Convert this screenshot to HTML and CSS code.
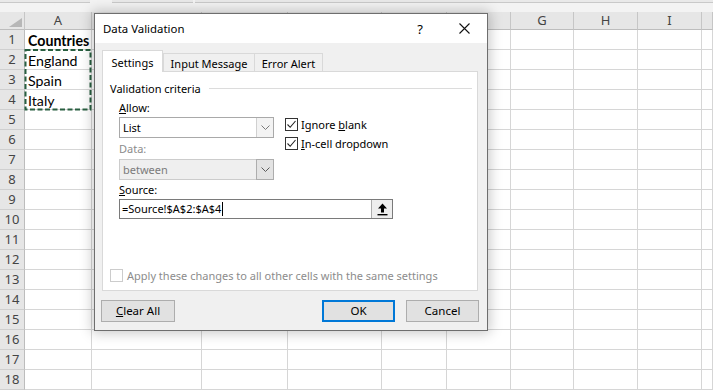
FILE: index.html
```html
<!DOCTYPE html>
<html>
<head>
<meta charset="utf-8">
<title>Data Validation</title>
<link rel="stylesheet" href="styles.css">
</head>
<body>
<div class="app">
  <div class="ribbon-edge">
    <span class="seg seg1"></span><span class="seg seg2"></span><span class="seg seg3"></span>
  </div>
  <div class="sheet">
    <div class="grid">
      <div class="corner"><svg width="25" height="18" viewBox="0 0 25 18"><polygon points="22,6 22,15 9,15" fill="#b7b7b7"/></svg></div>
      <div class="ch">A</div><div class="ch"></div><div class="ch"></div><div class="ch"></div><div class="ch"></div><div class="ch"></div><div class="ch">G</div><div class="ch">H</div><div class="ch">I</div><div class="ch"></div>

      <div class="rh">1</div><div class="txt bold">Countries</div><div></div><div></div><div></div><div></div><div></div><div></div><div></div><div></div><div></div>
      <div class="rh">2</div><div class="txt">England</div><div></div><div></div><div></div><div></div><div></div><div></div><div></div><div></div><div></div>
      <div class="rh">3</div><div class="txt">Spain</div><div></div><div></div><div></div><div></div><div></div><div></div><div></div><div></div><div></div>
      <div class="rh">4</div><div class="txt">Italy</div><div></div><div></div><div></div><div></div><div></div><div></div><div></div><div></div><div></div>
      <div class="rh">5</div><div></div><div></div><div></div><div></div><div></div><div></div><div></div><div></div><div></div><div></div>
      <div class="rh">6</div><div></div><div></div><div></div><div></div><div></div><div></div><div></div><div></div><div></div><div></div>
      <div class="rh">7</div><div></div><div></div><div></div><div></div><div></div><div></div><div></div><div></div><div></div><div></div>
      <div class="rh">8</div><div></div><div></div><div></div><div></div><div></div><div></div><div></div><div></div><div></div><div></div>
      <div class="rh">9</div><div></div><div></div><div></div><div></div><div></div><div></div><div></div><div></div><div></div><div></div>
      <div class="rh">10</div><div></div><div></div><div></div><div></div><div></div><div></div><div></div><div></div><div></div><div></div>
      <div class="rh">11</div><div></div><div></div><div></div><div></div><div></div><div></div><div></div><div></div><div></div><div></div>
      <div class="rh">12</div><div></div><div></div><div></div><div></div><div></div><div></div><div></div><div></div><div></div><div></div>
      <div class="rh">13</div><div></div><div></div><div></div><div></div><div></div><div></div><div></div><div></div><div></div><div></div>
      <div class="rh">14</div><div></div><div></div><div></div><div></div><div></div><div></div><div></div><div></div><div></div><div></div>
      <div class="rh">15</div><div></div><div></div><div></div><div></div><div></div><div></div><div></div><div></div><div></div><div></div>
      <div class="rh">16</div><div></div><div></div><div></div><div></div><div></div><div></div><div></div><div></div><div></div><div></div>
      <div class="rh">17</div><div></div><div></div><div></div><div></div><div></div><div></div><div></div><div></div><div></div><div></div>
      <div class="rh">18</div><div></div><div></div><div></div><div></div><div></div><div></div><div></div><div></div><div></div><div></div>
    </div>
    <svg class="ants" width="68" height="62" viewBox="0 0 68 62"><rect x="1.5" y="1" width="65" height="59.5" fill="none" stroke="#285f40" stroke-width="2" stroke-dasharray="5 2.5"/></svg>
  </div>

  <div class="dialog">
    <div class="titlebar">
      <span class="title">Data Validation</span>
      <span class="help">?</span>
      <span class="close"><svg width="11" height="11" viewBox="0 0 11 11"><path d="M0.5 0.5 L10.5 10.5 M10.5 0.5 L0.5 10.5" stroke="#111" stroke-width="1.1" fill="none"/></svg></span>
    </div>
    <div class="dbody">
      <div class="tabs">
        <div class="tab active">Settings</div>
        <div class="tab t-input">Input Message</div>
        <div class="tab t-error">Error Alert</div>
      </div>
      <div class="panel">
        <div class="group-head"><span>Validation criteria</span><span class="rule"></span></div>
        <div class="criteria">
          <div class="crit-top">
            <div class="crit-left">
              <div class="lbl lbl-allow"><u>A</u>llow:</div>
              <div class="select">
                <span class="val">List</span>
                <span class="drop"><svg width="9" height="5" viewBox="0 0 9 5"><path d="M0.5 0.5 L4.5 4.5 L8.5 0.5" stroke="#7a7a7a" fill="none"/></svg></span>
              </div>
              <div class="lbl lbl-data dis">Data:</div>
              <div class="select disabled">
                <span class="val">between</span>
                <span class="drop"><svg width="9" height="5" viewBox="0 0 9 5"><path d="M0.5 0.5 L4.5 4.5 L8.5 0.5" stroke="#5a5a5a" fill="none"/></svg></span>
              </div>
            </div>
            <div class="checks">
              <div class="check">
                <span class="box"><svg width="11" height="11" viewBox="0 0 11 11"><path d="M1.5 5.5 L4.2 8.3 L9.5 2" stroke="#222" stroke-width="1.1" fill="none"/></svg></span>
                <span>Ignore <u>b</u>lank</span>
              </div>
              <div class="check">
                <span class="box"><svg width="11" height="11" viewBox="0 0 11 11"><path d="M1.5 5.5 L4.2 8.3 L9.5 2" stroke="#222" stroke-width="1.1" fill="none"/></svg></span>
                <span><u>I</u>n-cell dropdown</span>
              </div>
            </div>
          </div>
          <div class="lbl lbl-source"><u>S</u>ource:</div>
          <div class="source">
            <span class="val">=Source!$A$2:$A$4<span class="caret"></span></span>
            <span class="refbtn"><svg width="11" height="13" viewBox="0 0 11 13"><path d="M5.5 0.5 L10 5.5 L7 5.5 L7 9.5 L4 9.5 L4 5.5 L1 5.5 Z" fill="#000"/><rect x="0.5" y="11" width="10" height="1.4" fill="#000"/></svg></span>
          </div>
        </div>
        <div class="apply">
          <span class="box dis"></span>
          <span>Apply these changes to all other cells with the same settings</span>
        </div>
      </div>
      <div class="buttons">
        <button class="btn btn-clear"><u>C</u>lear All</button>
        <span class="spacer"></span>
        <button class="btn default">OK</button>
        <button class="btn">Cancel</button>
      </div>
    </div>
  </div>
</div>
</body>
</html>
```

FILE: styles.css
```css
* { box-sizing: border-box; }
html, body { margin: 0; padding: 0; }
body {
  width: 713px;
  height: 390px;
  overflow: hidden;
  background: #ffffff;
  font-family: "Noto Sans", "Segoe UI", sans-serif;
}
.app {
  position: relative;
  width: 713px;
  height: 390px;
  overflow: hidden;
  background: #ffffff;
}

/* top strip (bottom of formula bar) */
.ribbon-edge {
  height: 12px;
  background: #f3f3f3;
  display: flex;
  align-items: flex-start;
}
.seg {
  height: 3px;
  background: #e9e9e9;
  border-bottom: 1px solid #c9c9c9;
}
.seg1 { width: 90px; }
.seg2 { width: 81px; margin-left: 22px; }
.seg3 { flex: 1; margin-left: 2px; }

/* sheet grid */
.sheet { position: relative; }
.grid {
  display: grid;
  grid-template-columns: 25px 67px 110px 86px 94px 65px 64px 63px 64px 64px 11px;
  grid-template-rows: 18px repeat(18, 20px);
}
.grid > div {
  border-right: 1px solid #d6d6d6;
  border-bottom: 1px solid #d6d6d6;
  overflow: hidden;
  white-space: nowrap;
}
.grid > .corner,
.grid > .ch,
.grid > .rh {
  background: #e6e6e6;
  color: #444;
  font-family: "Noto Sans", sans-serif;
  font-size: 13px;
  text-align: center;
}
.grid > .corner { border-right-color: #c6c6c6; border-bottom-color: #bdbdbd; }
.corner svg { display: block; }
.grid > .ch {
  line-height: 17px;
  border-right-color: #c6c6c6;
  border-bottom-color: #bdbdbd;
}
.grid > .rh {
  line-height: 19px;
  border-right-color: #bdbdbd;
  border-bottom-color: #cfcfcf;
}
.txt {
  font-family: "Lato", "Liberation Sans", sans-serif;
  font-size: 14.2px;
  line-height: 21px;
  padding-left: 3px;
  color: #000;
}
.txt.bold { font-weight: 700; }

.ants {
  position: absolute;
  left: 24px;
  top: 37px;
}

/* dialog */
.dialog {
  position: absolute;
  left: 94px;
  top: 13px;
  width: 394px;
  height: 318px;
  border: 1px solid #6e6e6e;
  background: #f0f0f0;
  box-shadow: 0 0 12px 2px rgba(0, 0, 0, 0.22);
  display: flex;
  flex-direction: column;
  font-family: "Noto Sans", "Segoe UI", sans-serif;
  font-size: 11px;
  color: #000;
}
.titlebar {
  height: 30px;
  background: #ffffff;
  display: flex;
  align-items: center;
  padding-left: 8px;
}
.title { font-size: 11.4px; flex: 1; }
.help { width: 14px; text-align: center; font-size: 13px; margin-right: 32px; }
.close { width: 11px; height: 11px; margin-right: 17px; display: flex; }
.close svg { display: block; }

.dbody {
  flex: 1;
  display: flex;
  flex-direction: column;
  padding: 7px 9px 8px 7px;
}
.tabs {
  height: 21px;
  display: flex;
  align-items: flex-end;
  position: relative;
  z-index: 1;
}
.tab {
  height: 18px;
  background: #f0f0f0;
  border: 1px solid #d9d9d9;
  border-bottom: none;
  text-align: center;
  line-height: 16px;
  padding-top: 2px;
  margin-left: -1px;
}
.tab.active {
  width: 61px;
  height: 22px;
  margin-left: 0;
  margin-bottom: -1px;
  background: #ffffff;
  line-height: 20px;
  padding-top: 2px;
  position: relative;
  z-index: 2;
}
.t-input { width: 92px; margin-left: 0; }
.t-error { width: 69px; }

.panel {
  height: 220px;
  background: #ffffff;
  border: 1px solid #d9d9d9;
  display: flex;
  flex-direction: column;
  padding: 8px 5px 8px 7px;
}
.group-head {
  display: flex;
  align-items: center;
  height: 16px;
}
.rule {
  flex: 1;
  height: 1px;
  background: #dcdcdc;
  margin-left: 8px;
}
.criteria { padding-left: 9px; }
.crit-top { display: flex; }
.crit-left { width: 155px; }
.lbl { height: 16px; line-height: 16px; }
.lbl-allow { margin-top: 4px; }
.lbl-data { margin-top: 3px; }
.lbl-source { margin-top: 2px; }
.dis { color: #8c8c8c; }

.select {
  margin-top: 1px;
  height: 21px;
  border: 1px solid #a9a9a9;
  background: #ffffff;
  display: flex;
}
.select.disabled {
  margin-top: 2px;
  background: #efefef;
  border-color: #cccccc;
  color: #7b7b7b;
}
.select .val {
  flex: 1;
  padding-left: 3px;
  line-height: 19px;
}
.drop {
  width: 17px;
  border-left: 1px solid #d0d0d0;
  background: #f3f3f3;
  display: flex;
  align-items: center;
  justify-content: center;
}
.select.disabled .drop {
  border: 1px solid #adadad;
  background: #e3e3e3;
  margin: -1px -1px -1px 0;
  width: 18px;
}
.drop svg { display: block; }

.checks {
  margin-left: 11px;
  padding-top: 22px;
  display: flex;
  flex-direction: column;
  gap: 6px;
}
.check {
  display: flex;
  align-items: center;
  gap: 3px;
  height: 13px;
  line-height: 13px;
}
.box {
  width: 13px;
  height: 13px;
  border: 1px solid #333333;
  background: #ffffff;
  display: flex;
  align-items: center;
  justify-content: center;
}
.box svg { display: block; }
.box.dis { border-color: #cccccc; }

.source {
  margin-top: 1px;
  width: 274px;
  height: 20px;
  border: 1px solid #7a7a7a;
  background: #ffffff;
  display: flex;
}
.source .val {
  flex: 1;
  padding-left: 2px;
  line-height: 18px;
  display: flex;
  align-items: center;
}
.caret {
  width: 1px;
  height: 14px;
  background: #000;
  margin-left: 1px;
}
.refbtn {
  width: 21px;
  border-left: 1px solid #adadad;
  background: #eeeeee;
  display: flex;
  align-items: center;
  justify-content: center;
}
.refbtn svg { display: block; }

.apply {
  margin-top: auto;
  display: flex;
  align-items: center;
  gap: 4px;
  height: 13px;
  color: #8c8c8c;
}

.buttons {
  margin-top: 9px;
  display: flex;
  margin-left: -1px;
  margin-right: -1px;
}
.spacer { flex: 1; }
.btn {
  width: 73px;
  height: 22px;
  border: 1px solid #adadad;
  background: #e1e1e1;
  font-family: "Noto Sans", "Segoe UI", sans-serif;
  font-size: 11.5px;
  color: #000;
  padding: 0;
  line-height: 18px;
}
.btn-clear { width: 74px; }
.btn.default {
  border: 2px solid #0078d7;
  margin-right: 11px;
}
```
